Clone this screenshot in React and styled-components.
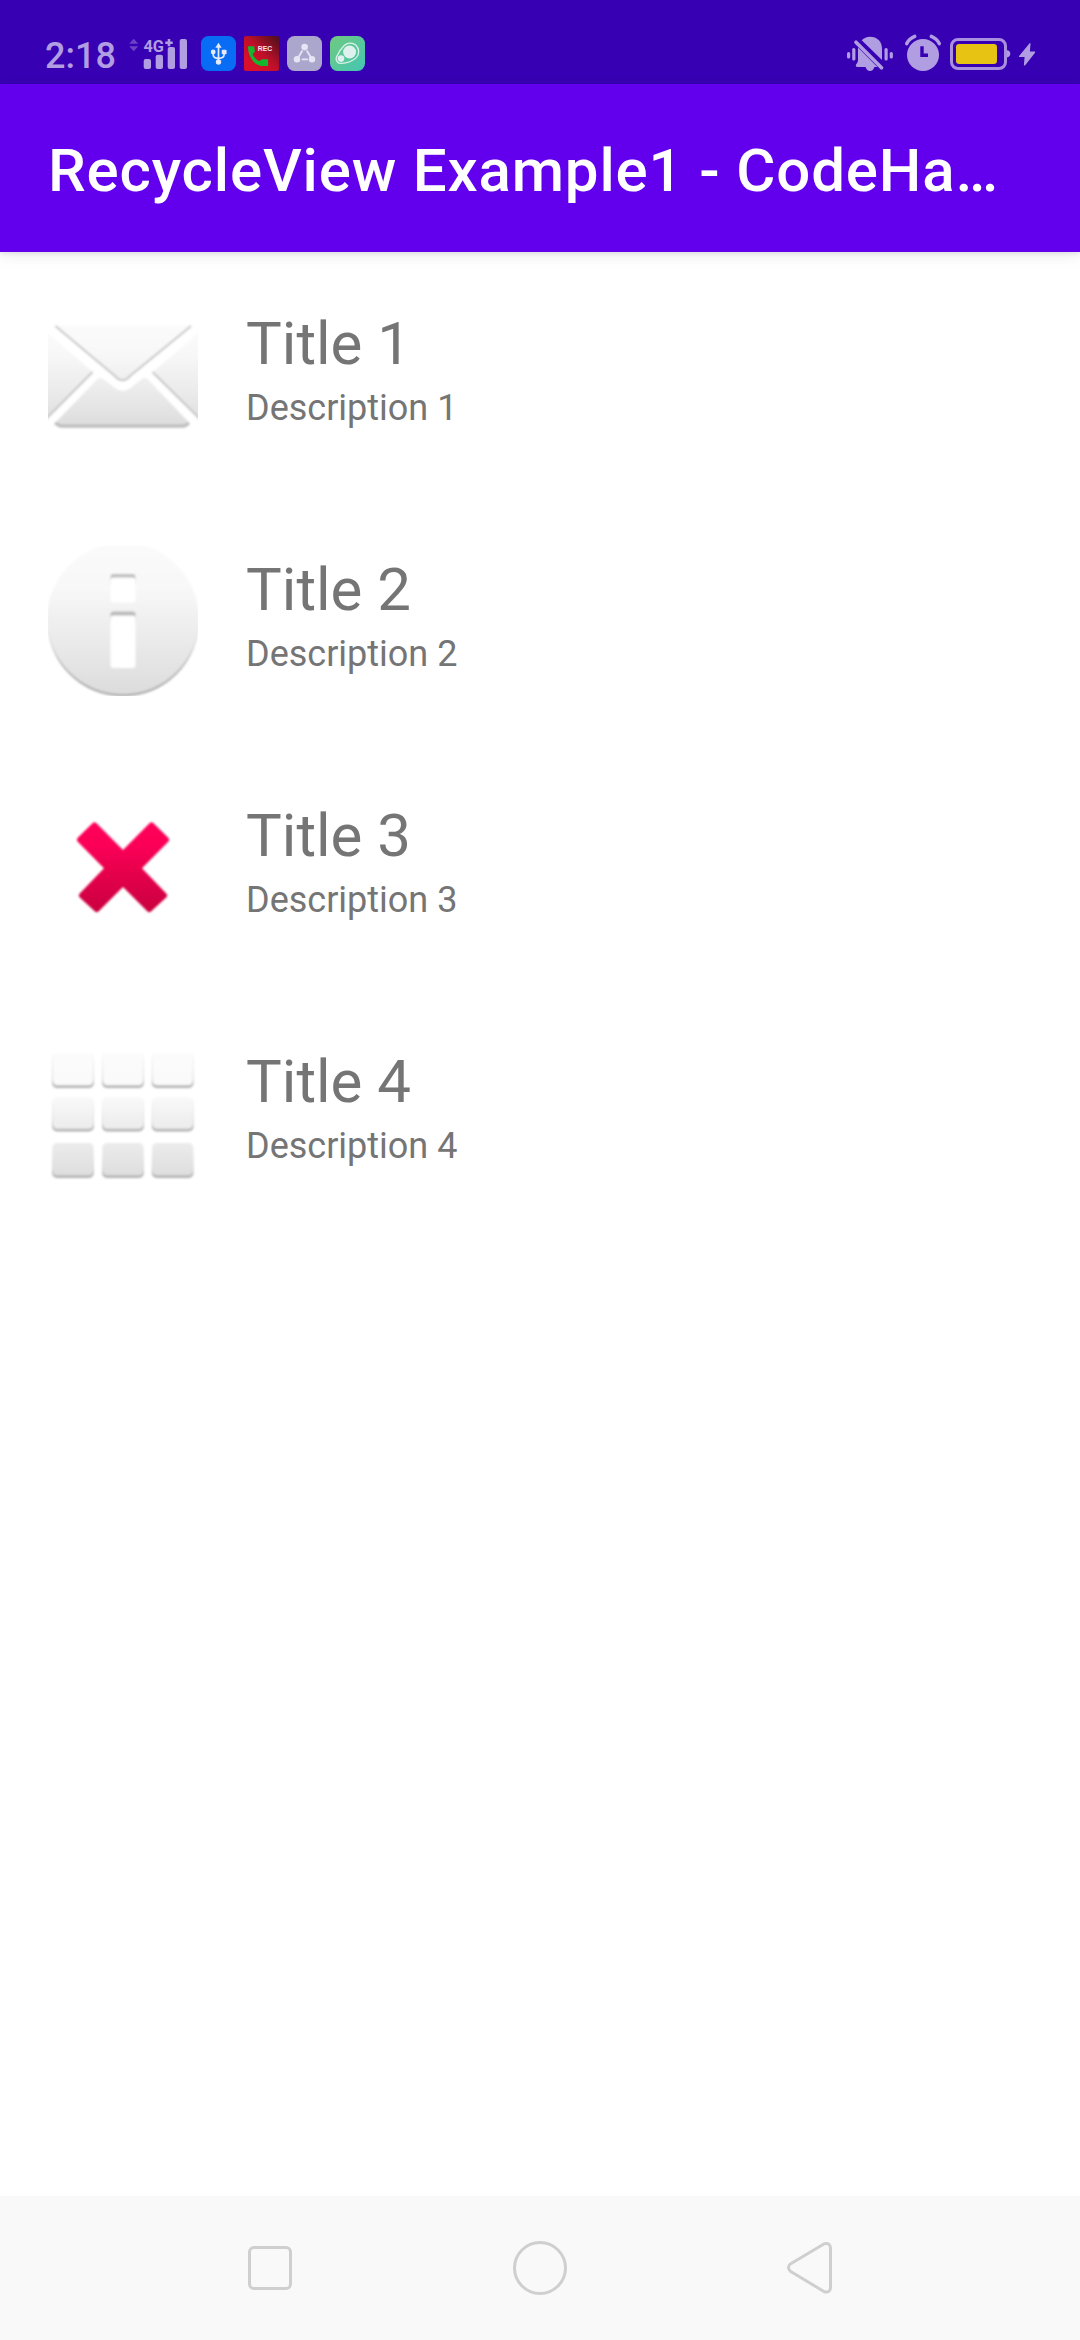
import React from 'react';
import styled, { createGlobalStyle } from 'styled-components';

const GlobalStyle = createGlobalStyle`
  html, body { margin: 0; padding: 0; background: #fff; }
  body { font-family: Roboto, "Noto Sans", sans-serif; }
  svg { display: block; flex: none; }
`;

const tint = '#b19de1';

const Screen = styled.div`
  display: flex;
  flex-direction: column;
  width: 1080px;
  height: 2340px;
  background: #fff;
  overflow: hidden;
`;

const StatusBar = styled.div`
  display: flex;
  justify-content: space-between;
  box-sizing: border-box;
  height: 84px;
  padding: 32px 44px 0 45px;
  background: #3700b3;
  color: ${tint};
`;

const StatusGroup = styled.div`
  display: flex;
  align-items: flex-start;
`;

const Clock = styled.span`
  width: 84px;
  padding-top: 3px;
  font-size: 36px;
  line-height: 42px;
  font-weight: 500;
  white-space: nowrap;
`;

const AppBadges = styled.div`
  display: flex;
  gap: 8px;
  padding: 4px 0 0 14px;
`;

const AppBar = styled.header`
  display: flex;
  align-items: center;
  box-sizing: border-box;
  height: 168px;
  padding: 5px 48px 0;
  background: #6200ee;
  box-shadow: 0 2px 4px rgba(0, 0, 0, 0.08), 0 4px 16px rgba(0, 0, 0, 0.07);
`;

const AppTitle = styled.h1`
  margin: 0;
  color: #fff;
  font-size: 60px;
  line-height: 72px;
  font-weight: 500;
  letter-spacing: 0.85px;
  white-space: nowrap;
`;

const List = styled.main`
  flex: 1;
  display: flex;
  flex-direction: column;
`;

const Row = styled.article`
  display: flex;
  gap: 48px;
  padding: 48px;
  height: 150px;
`;

const RowText = styled.div`
  display: flex;
  flex-direction: column;
  gap: 8px;
  padding-top: 9px;
  color: #757575;
  white-space: nowrap;
`;

const RowTitle = styled.span`
  font-size: 60px;
  line-height: 70px;
`;

const RowDescription = styled.span`
  font-size: 36px;
  line-height: 42px;
`;

const NavBar = styled.nav`
  display: grid;
  grid-template-columns: repeat(3, 270px);
  justify-content: center;
  height: 144px;
  background: #f9f9f9;
`;

const NavButton = styled.div`
  display: flex;
  align-items: center;
  justify-content: center;
`;

const SignalIcon = () => (
  <svg width="58" height="40" viewBox="129 32 58 40">
    <path d="M133.7 38.7l4.5 5h-9zM129.2 46.3h9l-4.5 5z" fill="#6b45c6" />
    <g fill={tint}>
      <text x="143.4" y="51.6" fontFamily="Roboto, sans-serif" fontSize="16.5" fontWeight="700" textLength="20.5" lengthAdjust="spacingAndGlyphs">4G</text>
      <path d="M167.7 39h2.6v2.4h2.4v2.6h-2.4v2.3h-2.6V44h-2.4v-2.6h2.4z" />
      <rect x="143.7" y="59" width="7.3" height="10" rx="2" />
      <rect x="155.7" y="54.7" width="7.3" height="14.3" rx="2" />
      <rect x="167.7" y="47" width="7.3" height="22" rx="2" />
      <rect x="179.7" y="39" width="7.3" height="30" rx="2" />
    </g>
  </svg>
);

const UsbIcon = () => (
  <svg width="35" height="35" viewBox="0 0 35 35">
    <rect width="35" height="35" rx="7.5" fill="#086cf5" />
    <g fill="none" stroke="#e4e9fb" strokeWidth="1.7">
      <path d="M17.5 10v15M12.2 16.5v2.2c0 2.3 1.8 3.5 5.3 3.7 3.7-.2 5.6-1.6 5.6-3.9v-2" />
    </g>
    <g fill="#e4e9fb">
      <path d="M17.5 6.8l3.2 4.9h-6.4z" />
      <circle cx="12.2" cy="16" r="2.4" />
      <rect x="20.7" y="13.7" width="4.9" height="4.5" rx="1" />
      <circle cx="17.5" cy="26" r="2.7" />
    </g>
  </svg>
);

const RecorderIcon = () => (
  <svg width="35" height="35" viewBox="0 0 35 35">
    <defs>
      <linearGradient id="rec" x1="0.2" y1="0.8" x2="1" y2="0">
        <stop offset="0" stopColor="#d9102b" />
        <stop offset="0.4" stopColor="#be1029" />
        <stop offset="1" stopColor="#48101c" />
      </linearGradient>
    </defs>
    <rect width="35" height="35" rx="2" fill="url(#rec)" />
    <path d="M4 10.2h6.2l.7 5.6-2.4 2.4c1.4 3 3.5 5.2 6.8 7l2.800-2h6V30h-7.300C10.200 28.500 4 21 4 10.200z" fill="#14b82c" />
    <text x="13.7" y="15.2" fontFamily="Liberation Sans, Arial, sans-serif" fontSize="7.3" fontWeight="700" fill="#f5e5ea" textLength="14.5" lengthAdjust="spacingAndGlyphs">REC</text>
  </svg>
);

const ShareNodesIcon = () => (
  <svg width="35" height="35" viewBox="0 0 35 35">
    <rect width="35" height="35" rx="7.5" fill="#aba6cb" />
    <g stroke="#e7e4f4" strokeWidth="1.8">
      <path d="M15.500 14.500l-4 6.500M19.700 14.500l4 6.500M14.800 23.300h6" />
    </g>
    <g fill="#e7e4f4">
      <circle cx="17.6" cy="11.1" r="3.3" />
      <circle cx="10" cy="23.3" r="3.2" />
      <circle cx="25" cy="23.3" r="3.2" />
    </g>
  </svg>
);

const CloneIcon = () => (
  <svg width="35" height="35" viewBox="0 0 35 35">
    <defs>
      <linearGradient id="clone" x1="0" y1="0" x2="1" y2="1">
        <stop offset="0" stopColor="#71c980" />
        <stop offset="1" stopColor="#43c6b4" />
      </linearGradient>
    </defs>
    <rect width="35" height="35" rx="7.5" fill="url(#clone)" />
    <path d="M14.200 9.500C17 6.500 22.500 6 26 9.300s3.500 9.200.3 12.300c-3.800 3.700-10.300 5.500-15.500 5.800-3.700.1-5.700-3.700-4.100-7 1.600-3.600 4.600-8 7.500-10.900z" fill="none" stroke="#dbf2ea" strokeWidth="1.3" />
    <circle cx="19.600" cy="16" r="6.500" fill="#dff1ee" />
    <circle cx="11" cy="22.600" r="3.300" fill="#dff1ee" />
  </svg>
);

const StatusIcons = () => (
  <svg width="190" height="40" viewBox="846 32 190 40" fill={tint}>
    <g>
      <rect x="847" y="52" width="3.200" height="6.500" rx="1.500" />
      <rect x="852.200" y="48" width="3.200" height="12.500" rx="1.500" />
      <rect x="884.500" y="48" width="3.200" height="12.500" rx="1.500" />
      <rect x="889.700" y="52" width="3.200" height="6.500" rx="1.500" />
      <path d="M861.700 40.200C864 38 866.600 36.800 870 36.800c7.200 0 12 4.800 12 12V60z" />
      <path d="M858 47.500v12.700c0 1.500-.6 2.800-1.600 3.800-1.200 1.400-.6 3 1 3h8.200c.8 2.600 2.200 4 4.400 4s3.600-1.400 4.400-4h3z" />
      <path d="M856 42.300l25.500 25.500" stroke={tint} strokeWidth="3.700" strokeLinecap="round" />
    </g>
    <g>
      <circle cx="923" cy="55" r="16" />
      <path d="M906.700 43.600c1.700-3.300 4.400-5.700 8-7.200M939.300 43.600c-1.700-3.300-4.400-5.700-8-7.200" fill="none" stroke={tint} strokeWidth="3.500" strokeLinecap="round" />
      <path d="M922 46.300v9h6" fill="none" stroke="#3700b3" strokeWidth="3.400" />
    </g>
    <g>
      <rect x="951.500" y="39.500" width="54" height="29" rx="6.500" fill="none" stroke="#a98fe0" strokeWidth="3" />
      <path d="M1007 50.300c1.900.1 3.300 1.400 3.300 3.500s-1.400 3.500-3.300 3.600z" />
      <rect x="956" y="44" width="41" height="20" rx="3.200" fill="#e7c414" />
    </g>
    <path d="M1029.600 43.200l-10.500 12.900c-.4.600-.1 1 .5 1h5l-.7 7.700c0 .9.700 1.100 1.300.4l9.800-12.500c.4-.6.100-1.100-.6-1.100h-4.500l.6-7.800c0-.9-.4-1.100-.9-.6z" />
  </svg>
);

const MailIcon = () => (
  <svg width="150" height="150" viewBox="0 0 150 150">
    <defs>
      <linearGradient id="mail" gradientUnits="userSpaceOnUse" x1="0" y1="22" x2="0" y2="128">
        <stop offset="0" stopColor="#fbfbfb" />
        <stop offset="0.3" stopColor="#f8f8f8" />
        <stop offset="0.650" stopColor="#ebebeb" />
        <stop offset="1" stopColor="#dcdcdc" />
      </linearGradient>
      <filter id="mailSoft" x="-5%" y="-5%" width="110%" height="110%"><feGaussianBlur stdDeviation="0.8" /></filter>
    </defs>
    <g filter="url(#mailSoft)">
      <path d="M8 25h134L80 78q-5 4-10 0z" fill="url(#mail)" />
      <path d="M-6 28L45 72L-6 122zM156 28L105 72l51 50z" fill="url(#mail)" />
      <path d="M7 123L50 78.500q2-1.500 4.500 0L67 88q7.500 6 15.500 0L94.500 78.500q2.500-1.500 4.500 0l42.500 44.500q-2 5-6 5H13q-4 0-6-5z" fill="url(#mail)" />
      <g fill="none" stroke="#c8c8c8" strokeWidth="2">
        <path d="M7.500 26L67 76q7.500 8.500 15 0l61-50" />
        <path d="M44.500 72L-5 122M104.500 72l50.500 50" />
      </g>
      <path d="M7 123q4 3 8 3h119q4 0 7-3" fill="none" stroke="#bdbdbd" strokeWidth="3" />
    </g>
  </svg>
);

const InfoIcon = () => (
  <svg width="150" height="150" viewBox="0 0 150 150">
    <defs>
      <linearGradient id="info" x1="0" y1="0" x2="0" y2="1">
        <stop offset="0" stopColor="#fafafa" />
        <stop offset="0.300" stopColor="#f8f8f8" />
        <stop offset="1" stopColor="#dcdcdc" />
      </linearGradient>
      <linearGradient id="infoEdge" x1="0" y1="0" x2="0" y2="1">
        <stop offset="0.400" stopColor="#b0b0b0" stopOpacity="0" />
        <stop offset="0.750" stopColor="#b4b4b4" />
        <stop offset="1" stopColor="#aaa" />
      </linearGradient>
      <filter id="infoSoft" x="-5%" y="-5%" width="110%" height="110%"><feGaussianBlur stdDeviation="0.8" /></filter>
    </defs>
    <g filter="url(#infoSoft)">
      <circle cx="75" cy="74.500" r="76" fill="url(#infoEdge)" />
      <circle cx="75" cy="72.500" r="75.800" fill="url(#info)" />
      <rect x="62.500" y="28" width="25" height="12" rx="3" fill="#bfbfbf" />
      <rect x="62.500" y="31.500" width="25" height="25" rx="3" fill="#fff" />
      <rect x="62.500" y="65.500" width="25" height="12" rx="3" fill="#bababa" />
      <rect x="62.500" y="69.500" width="25" height="52.500" rx="3" fill="#fff" />
    </g>
  </svg>
);

const DeleteIcon = () => (
  <svg width="150" height="150" viewBox="0 0 150 150">
    <defs>
      <linearGradient id="del" x1="0" y1="0" x2="0" y2="1">
        <stop offset="0" stopColor="#ff0059" />
        <stop offset="0.250" stopColor="#fb0057" />
        <stop offset="1" stopColor="#c9003f" />
      </linearGradient>
      <filter id="delSoft" x="-5%" y="-5%" width="110%" height="110%"><feGaussianBlur stdDeviation="0.9" /></filter>
    </defs>
    <path
      filter="url(#delSoft)"
      d="M44.500 31.200q2-1.800 4 0L75 58l26.500-26.800q2-1.800 4 0L120.500 46q1.500 1.800 0 3.500L94 76.300l24.500 25.500q1.500 1.800 0 3.500L103 119.500q-1.700 1.500-3.500 0L75 95l-24.500 24.500q-1.800 1.500-3.500 0L31.500 105.300q-1.500-1.700 0-3.500L56 76.300 29.500 49.500q-1.500-1.700 0-3.500z"
      fill="url(#del)"
    />
  </svg>
);

const keyRows = [
  { y: 15, h: 35, top: '#fcfcfc', bottom: '#f9f9f9' },
  { y: 59.5, h: 34, top: '#f9f9f9', bottom: '#ececec' },
  { y: 105, h: 35, top: '#ebebeb', bottom: '#dedede' },
];

const DialpadIcon = () => (
  <svg width="150" height="150" viewBox="0 0 150 150">
    <defs>
      {keyRows.map((r, i) => (
        <linearGradient key={i} id={`key${i}`} x1="0" y1="0" x2="0" y2="1">
          <stop offset="0" stopColor={r.top} />
          <stop offset="1" stopColor={r.bottom} />
        </linearGradient>
      ))}
      <linearGradient id="keyEdge" x1="0" y1="0" x2="0" y2="1">
        <stop offset="0" stopColor="#eee" stopOpacity="0.5" />
        <stop offset="0.700" stopColor="#dcdcdc" />
        <stop offset="1" stopColor="#b0b0b0" />
      </linearGradient>
      <filter id="keySoft" x="-5%" y="-5%" width="110%" height="110%"><feGaussianBlur stdDeviation="0.8" /></filter>
    </defs>
    <g filter="url(#keySoft)">
      {keyRows.map((r, i) =>
        [4, 54, 103.7].map((x) => (
          <g key={`${i}-${x}`}>
            <rect x={x} y={r.y} width="42" height={r.h} rx="5" fill="url(#keyEdge)" />
            <rect x={x + 1} y={r.y} width="40" height={r.h - 2.8} rx="4.5" fill={`url(#key${i})`} />
          </g>
        ))
      )}
    </g>
  </svg>
);

const items = [
  { Icon: MailIcon, title: 'Title 1', description: 'Description 1' },
  { Icon: InfoIcon, title: 'Title 2', description: 'Description 2' },
  { Icon: DeleteIcon, title: 'Title 3', description: 'Description 3' },
  { Icon: DialpadIcon, title: 'Title 4', description: 'Description 4' },
];

const NavGlyph = ({ children }) => (
  <svg width="60" height="60" viewBox="0 0 60 60" fill="none" stroke="#cfcfcf" strokeWidth="3" strokeLinejoin="round">
    {children}
  </svg>
);

export default function App() {
  return (
    <>
      <GlobalStyle />
      <Screen>
        <StatusBar>
          <StatusGroup>
            <Clock>2:18</Clock>
            <SignalIcon />
            <AppBadges>
              <UsbIcon />
              <RecorderIcon />
              <ShareNodesIcon />
              <CloneIcon />
            </AppBadges>
          </StatusGroup>
          <StatusGroup>
            <StatusIcons />
          </StatusGroup>
        </StatusBar>
        <AppBar>
          <AppTitle>RecycleView Example1 - CodeHa…</AppTitle>
        </AppBar>
        <List>
          {items.map(({ Icon, title, description }) => (
            <Row key={title}>
              <Icon />
              <RowText>
                <RowTitle>{title}</RowTitle>
                <RowDescription>{description}</RowDescription>
              </RowText>
            </Row>
          ))}
        </List>
        <NavBar>
          <NavButton>
            <NavGlyph><rect x="9.5" y="9.5" width="41" height="41" rx="4.5" /></NavGlyph>
          </NavButton>
          <NavButton>
            <NavGlyph><circle cx="30" cy="30" r="25.5" /></NavGlyph>
          </NavButton>
          <NavButton>
            <NavGlyph><path d="M44.300 5.800L10.300 26q-3.700 3.500 0 7.200L44.300 53.700q5.400 1.600 6.200-3.700V9.500q-.8-5.300-6.200-3.700z" /></NavGlyph>
          </NavButton>
        </NavBar>
      </Screen>
    </>
  );
}
